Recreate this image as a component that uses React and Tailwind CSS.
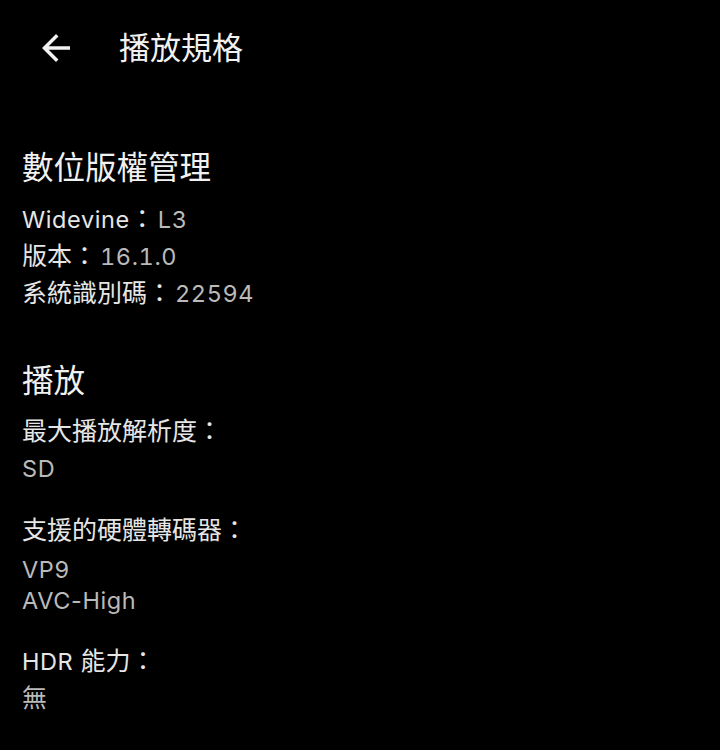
import React from 'react';

// CJK runs are drawn a bit larger than the latin ones, as on the device
const C = ({ children }) => <span className="text-[25px] tracking-normal">{children}</span>;
const V = ({ children }) => <span className="ml-[3px] text-[#bababa] tabular-nums">{children}</span>;

export default function App() {
  return (
    <div className="min-h-[750px] w-[720px] bg-black text-[23.5px] tracking-[0.6px] text-[#e6e6e6] font-['Inter','Noto_Sans_CJK_TC',sans-serif]">
      {/* top bar */}
      <div className="flex h-[96px] items-center">
        <svg viewBox="0 0 24 24" className="ml-[35px] h-[42px] w-[42px]" fill="#f2f2f2">
          <path d="M20 11H7.83l5.59-5.59L12 4l-8 8 8 8 1.41-1.41L7.83 13H20v-2z" />
        </svg>
        <div className="ml-[42px] text-[31px] leading-[40px] tracking-normal text-[#f1f1f1]">播放規格</div>
      </div>

      <div className="px-[22px]">
        {/* drm */}
        <div className="mt-[52px] text-[31.5px] leading-[40px] tracking-normal text-[#f1f1f1]">數位版權管理</div>
        <div className="mt-[13px]">
          <div className="h-[37px] leading-[37px]">
            Widevine<C>：</C><V>L3</V>
          </div>
          <div className="h-[37px] leading-[37px]">
            <C>版本：</C><V>16.1.0</V>
          </div>
          <div className="h-[37px] leading-[37px]">
            <C>系統識別碼：</C><V>22594</V>
          </div>
        </div>

        {/* playback */}
        <div className="mt-[49px] text-[31.5px] leading-[40px] tracking-normal text-[#f1f1f1]">播放</div>
        <div className="mt-[12px] h-[37px] leading-[37px]">
          <C>最大播放解析度：</C>
        </div>
        <div className="h-[37px] leading-[37px] text-[#bababa]">SD</div>

        <div className="mt-[25px] h-[37px] leading-[37px]">
          <C>支援的硬體轉碼器：</C>
        </div>
        <div className="mt-[5px] leading-[31px] text-[#bababa]">
          <div className="h-[31px]">VP9</div>
          <div className="h-[31px]">AVC-High</div>
        </div>

        <div className="mt-[27px] h-[37px] leading-[37px]">
          HDR <C>能力：</C>
        </div>
        <div className="h-[37px] leading-[37px] text-[#bababa]">
          <C>無</C>
        </div>
      </div>
    </div>
  );
}
